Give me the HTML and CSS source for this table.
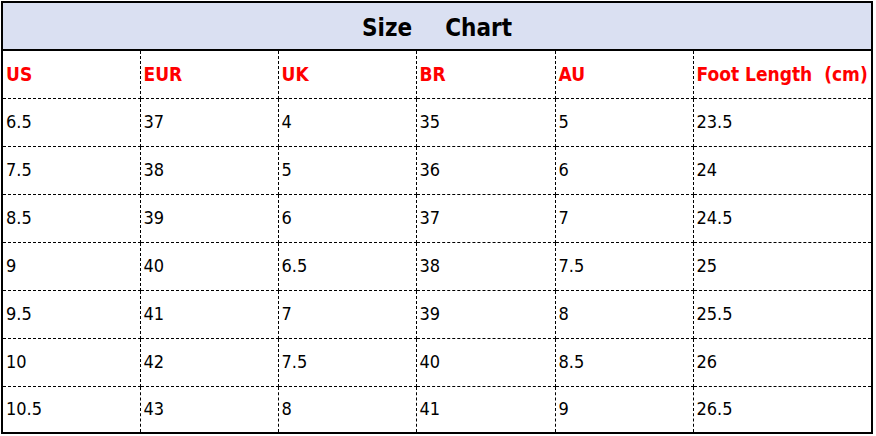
FILE: index.html
```html
<!DOCTYPE html>
<html>
<head>
<meta charset="utf-8">
<link rel="stylesheet" href="styles.css">
</head>
<body>
<table class="chart">
  <colgroup>
    <col class="c1"><col class="c2"><col class="c3"><col class="c4"><col class="c5"><col class="c6">
  </colgroup>
  <tr class="title-row"><th colspan="6" class="title"><span class="word">Size</span><span class="word">Chart</span></th></tr>
  <tr class="head-row"><td>US</td><td>EUR</td><td>UK</td><td>BR</td><td>AU</td><td>Foot Length&nbsp;&nbsp;(cm)</td></tr>
  <tr><td>6.5</td><td>37</td><td>4</td><td>35</td><td>5</td><td>23.5</td></tr>
  <tr><td>7.5</td><td>38</td><td>5</td><td>36</td><td>6</td><td>24</td></tr>
  <tr><td>8.5</td><td>39</td><td>6</td><td>37</td><td>7</td><td>24.5</td></tr>
  <tr><td>9</td><td>40</td><td>6.5</td><td>38</td><td>7.5</td><td>25</td></tr>
  <tr><td>9.5</td><td>41</td><td>7</td><td>39</td><td>8</td><td>25.5</td></tr>
  <tr><td>10</td><td>42</td><td>7.5</td><td>40</td><td>8.5</td><td>26</td></tr>
  <tr class="last"><td>10.5</td><td>43</td><td>8</td><td>41</td><td>9</td><td>26.5</td></tr>
</table>
</body>
</html>
```
FILE: styles.css
```css
html, body {
  margin: 0;
  background: #fff;
}
body {
  font-family: "DejaVu Sans Condensed", "DejaVu Sans", sans-serif;
  color: #000;
}
.chart {
  margin: 1px 0 0 1px;
  width: 872px;
  border-collapse: collapse;
  table-layout: fixed;
  border: 2px solid #000;
}
.c1 { width: 138px; }
.c2 { width: 138px; }
.c3 { width: 138px; }
.c4 { width: 139px; }
.c5 { width: 138px; }
.chart td {
  border: 1px dashed #000;
  height: 45px;
  padding: 0 0 2px 3px;
  font-size: 18px;
  vertical-align: middle;
  white-space: nowrap;
}
.title-row th {
  height: 42px;
  padding: 4px 0 0;
  background: #dae0f2;
  border-bottom: 2px solid #000;
  font-size: 24px;
  font-weight: bold;
  text-align: center;
}
.word + .word {
  margin-left: 33px;
}
.head-row td {
  color: #ff0000;
  font-weight: bold;
  font-size: 19px;
  padding-left: 3px;
}
.last td { height: 43px; }
```
